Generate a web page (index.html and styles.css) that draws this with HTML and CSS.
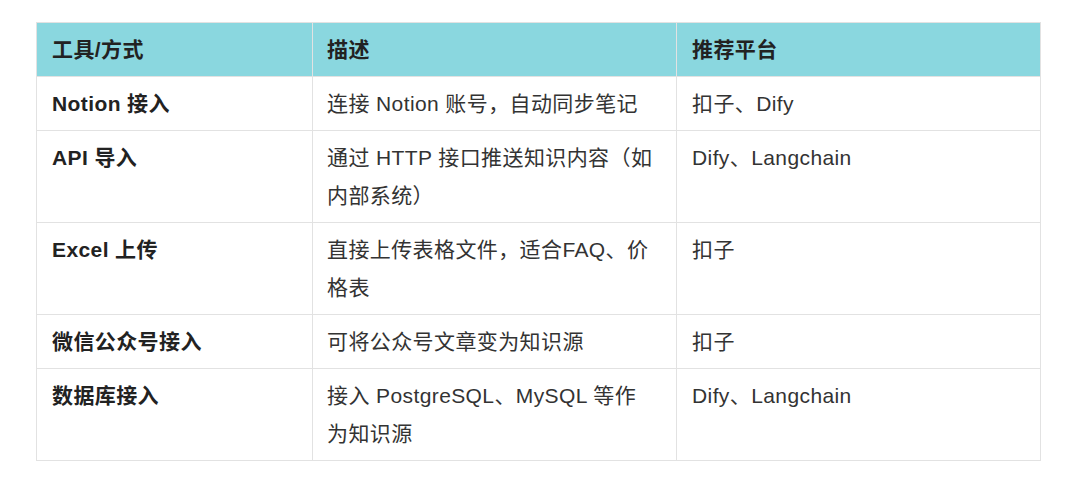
FILE: index.html
```html
<!DOCTYPE html>
<html lang="zh-CN">
<head>
<meta charset="utf-8">
<title>知识库接入方式</title>
<link rel="stylesheet" href="styles.css">
</head>
<body>
<main class="page">
  <table class="kb-table">
    <colgroup>
      <col class="col-tool">
      <col class="col-desc">
      <col class="col-platform">
    </colgroup>
    <thead>
      <tr>
        <th>工具/方式</th>
        <th class="desc">描述</th>
        <th>推荐平台</th>
      </tr>
    </thead>
    <tbody>
      <tr>
        <td class="name">Notion 接入</td>
        <td class="desc">连接 Notion 账号，自动同步笔记</td>
        <td>扣子、Dify</td>
      </tr>
      <tr>
        <td class="name">API 导入</td>
        <td class="desc">通过 HTTP 接口推送知识内容（如内部系统）</td>
        <td>Dify、Langchain</td>
      </tr>
      <tr>
        <td class="name">Excel 上传</td>
        <td class="desc">直接上传表格文件，适合FAQ、价格表</td>
        <td>扣子</td>
      </tr>
      <tr>
        <td class="name">微信公众号接入</td>
        <td class="desc">可将公众号文章变为知识源</td>
        <td>扣子</td>
      </tr>
      <tr>
        <td class="name">数据库接入</td>
        <td class="desc">接入 PostgreSQL、MySQL 等作为知识源</td>
        <td>Dify、Langchain</td>
      </tr>
    </tbody>
  </table>
</main>
</body>
</html>
```
FILE: styles.css
```css
html, body {
  margin: 0;
  padding: 0;
  background: #ffffff;
}

.page {
  padding: 22px 40px 0 36px;
  font-family: "Liberation Sans", "Noto Sans CJK SC", sans-serif;
  font-size: 21px;
  color: #333333;
}

.kb-table {
  width: 1004px;
  border-collapse: collapse;
  table-layout: fixed;
  border: 1px solid #e2e2e2;
}

.col-tool { width: 276px; }
.col-desc { width: 364px; }
.col-platform { width: 364px; }

.kb-table th,
.kb-table td {
  border: 1px solid #e2e2e2;
  padding: 8px 15px 7px 15px;
  text-align: left;
  vertical-align: top;
  line-height: 38px;
  letter-spacing: 0.4px;
}

.kb-table th.desc,
.kb-table td.desc {
  padding-left: 14px;
  padding-right: 21px;
}

.kb-table th {
  background: #8ad7df;
  font-weight: 700;
  color: #222222;
}

.kb-table td.name {
  font-weight: 700;
  color: #222222;
}
```
